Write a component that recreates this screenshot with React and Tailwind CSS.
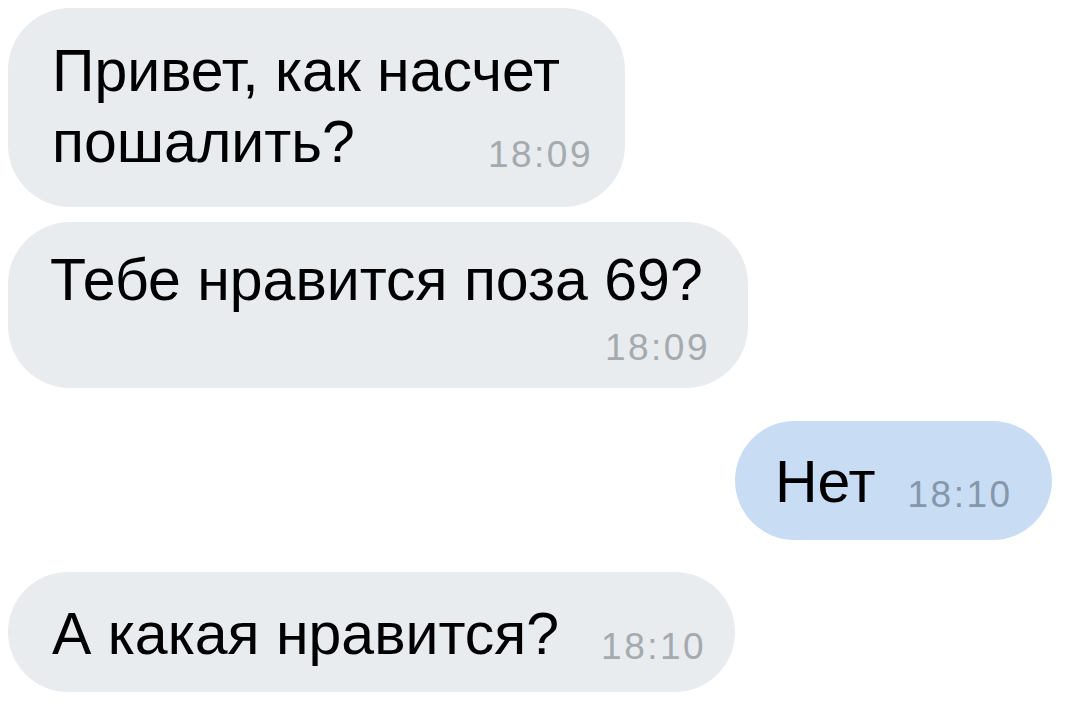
import React from 'react';

const font = { fontFamily: '"Liberation Sans", Arial, "Noto Sans", sans-serif' };

function Time({ children, blue }) {
    return (
        <span className={`text-[37px] tracking-[2.5px] leading-none translate-y-[5px] ${blue ? 'text-[#8497ab]' : 'text-[#a5aaae]'}`}>
            {children}
        </span>
    );
}

export default function App() {
    return (
        <div className="w-[1080px] h-[708px] bg-white overflow-hidden text-black" style={font}>
            <div className="flex flex-col px-[8px] pt-[8px]">
                <div className="self-start w-[617px] h-[199px] rounded-[62px] bg-[#e8ecef] pl-[44px] pr-[32px] pt-[28px]">
                    <div className="text-[59px] leading-[71px]">Привет, как насчет</div>
                    <div className="flex items-baseline justify-between">
                        <span className="text-[59px] leading-[71px]">пошалить?</span>
                        <Time>18:09</Time>
                    </div>
                </div>

                <div className="self-start mt-[15px] w-[740px] h-[166px] rounded-[62px] bg-[#e8ecef] pl-[42px] pr-[38px] pt-[28px]">
                    <div className="text-[59px] leading-[60px]">Тебе нравится поза 69?</div>
                    <div className="flex justify-end mt-[14px]">
                        <Time>18:09</Time>
                    </div>
                </div>

                <div className="self-end mr-[20px] mt-[33px] w-[317px] h-[119px] rounded-full bg-[#c8ddf4] pl-[40px] flex items-center">
                    <div className="flex items-baseline gap-[32px] mt-[4px]">
                        <span className="text-[59px] leading-none">Нет</span>
                        <Time blue>18:10</Time>
                    </div>
                </div>

                <div className="self-start mt-[32px] w-[727px] h-[120px] rounded-full bg-[#e8ecef] pl-[44px] flex items-center">
                    <div className="flex items-baseline gap-[42px] mt-[4px]">
                        <span className="text-[59px] leading-none">А какая нравится?</span>
                        <Time>18:10</Time>
                    </div>
                </div>
            </div>
        </div>
    );
}
